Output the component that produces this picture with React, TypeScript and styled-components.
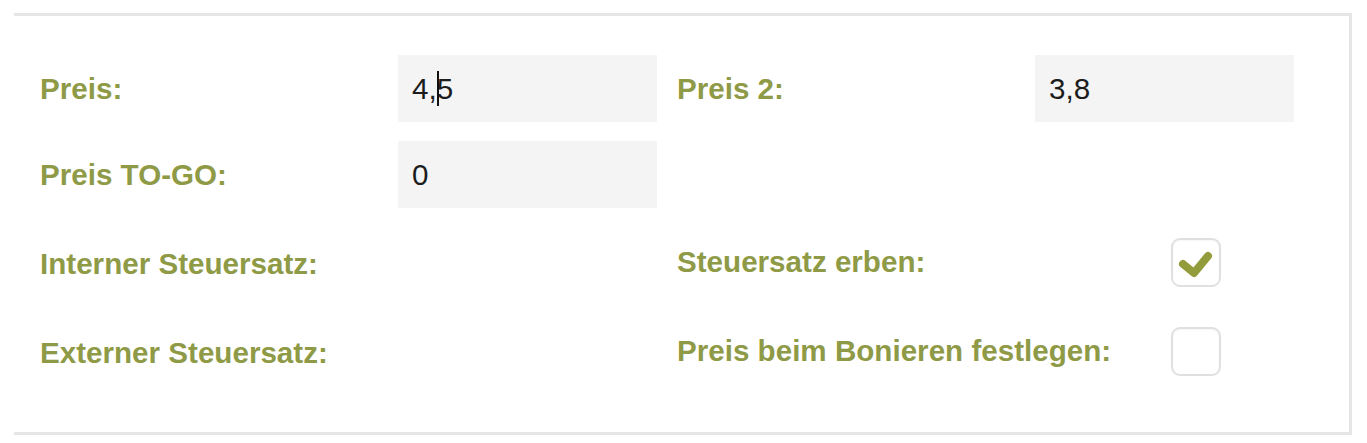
import React from "react";
import styled, { createGlobalStyle } from "styled-components";

const GlobalStyle = createGlobalStyle`
  html, body {
    margin: 0;
    padding: 0;
    background: #ffffff;
  }
  body {
    font-family: "Liberation Sans", Arial, Helvetica, sans-serif;
  }
`;

const Panel = styled.section`
  box-sizing: border-box;
  width: 1338px;
  margin: 13px 0 0 14px;
  padding: 39px 55px 46px 26px;
  border: 3px solid #e6e6e6;
  border-left: none;
  background: #ffffff;
  display: flex;
  flex-direction: column;
  gap: 19px;
`;

const Row = styled.div<{ $h: number }>`
  display: grid;
  grid-template-columns: 617px 617px;
  column-gap: 20px;
  height: ${(p) => p.$h}px;
`;

const Pair = styled.div`
  display: grid;
  grid-template-columns: 358px 259px;
  align-items: center;
  height: 100%;
`;

const Label = styled.span<{ $nudge?: number }>`
  font-size: 29.6px;
  font-weight: 700;
  color: #8f9a47;
  line-height: 34px;
  white-space: nowrap;
  padding-top: ${(p) => (p.$nudge ?? 0) * 2}px;
`;

const Field = styled.div`
  box-sizing: border-box;
  height: 67px;
  background: #f4f4f4;
  padding: 0 14px;
  display: flex;
  align-items: center;
  font-size: 29.6px;
  color: #1c1c1c;
  white-space: pre;
`;

const Caret = styled.span`
  display: inline-block;
  width: 2px;
  height: 35px;
  background: #111111;
  margin-right: -2px;
  position: relative;
  z-index: 1;
`;

const CheckCell = styled.div`
  padding-left: 136px;
  display: flex;
  align-items: center;
`;

const Box = styled.div<{ $checked?: boolean }>`
  box-sizing: border-box;
  width: 50px;
  height: 49px;
  border: 2px solid #e0e0e0;
  border-radius: 9px;
  background: #ffffff;
  box-shadow: inset 0 1px 2px rgba(0, 0, 0, 0.04);
  display: flex;
  align-items: center;
  justify-content: center;
`;

const Check = () => (
  <svg width="46" height="45" viewBox="0 0 46 45" style={{ display: "block" }}>
    <polyline
      points="10,24 21,33 35,16"
      fill="none"
      stroke="#939c3a"
      strokeWidth="8"
      strokeLinecap="round"
      strokeLinejoin="round"
    />
  </svg>
);

const Checkbox = ({ checked }: { checked?: boolean }) => (
  <Box $checked={checked}>{checked ? <Check /> : null}</Box>
);

export default function App() {
  return (
    <>
      <GlobalStyle />
      <Panel>
        <Row $h={67}>
          <Pair>
            <Label>Preis:</Label>
            <Field>
              4,<Caret />5
            </Field>
          </Pair>
          <Pair>
            <Label>Preis 2:</Label>
            <Field>3,8</Field>
          </Pair>
        </Row>
        <Row $h={67}>
          <Pair>
            <Label>Preis TO-GO:</Label>
            <Field>0</Field>
          </Pair>
          <Pair />
        </Row>
        <Row $h={70}>
          <Pair>
            <Label $nudge={2}>Interner Steuersatz:</Label>
          </Pair>
          <Pair>
            <Label>Steuersatz erben:</Label>
            <CheckCell>
              <Checkbox checked />
            </CheckCell>
          </Pair>
        </Row>
        <Row $h={70}>
          <Pair>
            <Label $nudge={2}>Externer Steuersatz:</Label>
          </Pair>
          <Pair>
            <Label>Preis beim Bonieren festlegen:</Label>
            <CheckCell>
              <Checkbox />
            </CheckCell>
          </Pair>
        </Row>
      </Panel>
    </>
  );
}
